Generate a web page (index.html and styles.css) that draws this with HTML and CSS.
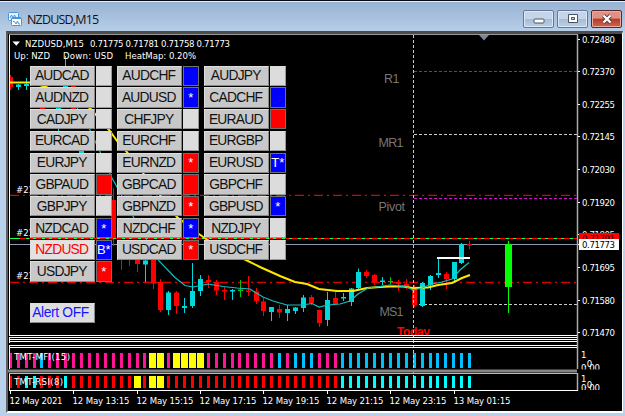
FILE: index.html
```
<!DOCTYPE html>
<html lang="en">
<head>
    <meta charset="UTF-8">
    <title>NZDUSD,M15</title>
    <link rel="stylesheet" href="styles.css">
</head>
<body>
    <div class="window">
        <div class="titlebar">
            <svg class="app-icon" width="14" height="15" viewBox="0 0 14 15">
                <rect x="0.5" y="0.5" width="10" height="8" rx="1" fill="#e8f4ff" stroke="#4a94dc"/>
                <path d="M2 6l1.500-3 1.500 3 1.500-3 1.500 3" fill="none" stroke="#4a94dc"/>
                <rect x="3.500" y="5.500" width="10" height="8" rx="1" fill="#fff" stroke="#4a94dc"/>
                <path d="M4 6.500h9" stroke="#4a94dc"/>
                <path d="M5 9.500h1.500l1.500 2.500 1.500-3 1 3h1.500" fill="none" stroke="#4a94dc"/>
            </svg>
            <span class="title">NZDUSD,M15</span>
            <div class="controls">
                <div class="control"><svg width="12" height="10" viewBox="0 0 12 10"><rect x="1" y="5" width="10" height="4" rx="1" fill="#fff" stroke="#4d5260"/></svg></div>
                <div class="control"><svg width="12" height="10" viewBox="0 0 12 10"><path d="M1.500 .5h9v8h-9zM4.500 3.500h3v2h-3z" fill="#fff" fill-rule="evenodd" stroke="#4d5260"/></svg></div>
                <div class="control close"><svg width="12" height="10" viewBox="0 0 12 10"><path d="M2.500 1.500l7 7M9.500 1.500l-7 7" stroke="#5a3038" stroke-width="4"/><path d="M2.500 1.500l7 7M9.500 1.500l-7 7" stroke="#fff" stroke-width="2.400"/></svg></div>
            </div>
        </div>
        <div class="client">
            <svg class="chart" width="614" height="377" viewBox="8 34 614 377">
                <defs>
                    <clipPath id="main"><rect x="10" y="35" width="567" height="300"/></clipPath>
                    <clipPath id="mfiScale"><rect x="578" y="348" width="43" height="21.500"/></clipPath>
                    <clipPath id="rsiScale"><rect x="578" y="373" width="43" height="17"/></clipPath>
                </defs>

                <!-- pivot levels -->
                <path class="level red" d="M414 71.500H577"/>
                <path class="level white" d="M414 134.500H577"/>
                <path class="level magenta" d="M414 198.500H577"/>
                <path class="level white" d="M414 304.500H577"/>
                <g class="level-name">
                    <text x="384" y="83" textLength="15.500">R1</text>
                    <text x="378.500" y="146.500" textLength="25">MR1</text>
                    <text x="378.500" y="210.500" textLength="26.500">Pivot</text>
                    <text x="379.500" y="316" textLength="24">MS1</text>
                </g>

                <!-- open orders -->
                <path class="order" d="M10 195.300H577M10 282.300H577"/>
                <g class="small">
                    <text x="16" y="192.500">#21</text>
                    <text x="16" y="235.500">#21</text>
                    <text x="16" y="279">#21</text>
                </g>
                <path d="M10 244.500H577" stroke="#8c9ab4"/>

                <g id="candles" clip-path="url(#main)"></g>
                <path d="M10 238.500H577" stroke="#2f4"/>
                <path d="M20 238.500H577" stroke="#f00" stroke-dasharray="6 3 4 3"/>

                <!-- moving averages -->
                <polyline class="slow" points="10,82.500 30,82.500 45,86.500 75,100 90,108 110,131 117,141 126,151 143,173 160,195 177,217 199,234 206,239 225,250 247,260.500 260,267 280,276 295,282 307,284 319,289 337,291 353,291 367,288 380,287 390,286.500 403,286.500 413,288 428,287.500 438,285 452,283 462,278 470,275"/>
                <polyline class="fast" points="65,87 90,130 112,178 117,187 135,220 159,261 175,277.500 185,285.500 193,287 208,284 223,286.500 237,288 250,289 253,291 263,297 273,301 287,305 302,305 312,303.500 319,307 328,305 340,304 350,301 358,294 368,288 380,286.500 390,285 407,287 413,290 422,288 432,284 442,282 452,279 460,270 469,262.500"/>
                <path d="M437 258H470" stroke="#fff" stroke-width="2"/>
                <path d="M508.500 241V313" stroke="#0f0"/>
                <rect x="505" y="244" width="7" height="43" fill="#0f0"/>
                <g clip-path="url(#main)"><text class="today" x="397" y="335.800" textLength="33">Today</text></g>

                <!-- indicator bars -->
                <g id="mfi"></g>
                <g id="rsi"></g>
                <path d="M413.500 35V390" stroke="#ccc" stroke-dasharray="3 2"/>

                <!-- frames -->
                <path d="M9.500 34.500V335M9.500 337V343M9.500 345V369M9.500 373V391" stroke="#fff"/>
                <path d="M577.500 34.500V369M577.500 373V391" stroke="#aaa" stroke-width="1.500"/>
                <path d="M9 34.500H578" stroke="#999"/>
                <path d="M9 335.500H577M9 337.500H577M9 339.500H577M9 341.500H577M9 345.500H577M9 347.500H577M9 390.500H578" stroke="#fff"/>
                <path d="M8 371H577" stroke="#858585" stroke-width="3"/>
                <path d="M9 373.500H577" stroke="#bbb"/>
                <path d="M479 35h10l-5 5.500z" fill="#78879a"/>
                <path d="M12.500 41.500h7.500l-3.700 4.200z" fill="#fff"/>

                <g class="small">
                    <text x="25" y="46.500" textLength="59">NZDUSD,M15</text>
                    <text x="90" y="46.500" textLength="140">0.71775 0.71781 0.71758 0.71773</text>
                    <text x="14" y="59.300" textLength="36">Up: NZD</text>
                    <text x="63" y="59.300" textLength="50">Down: USD</text>
                    <text x="125" y="59.300" textLength="71">HeatMap: 0.20%</text>
                    <text x="14" y="360" textLength="56">TMT-MFI(15)</text>
                    <text x="14" y="384.500" textLength="49">TMT-RSI(8)</text>
                </g>

                <g class="small" id="prices"></g>
                <g class="small" clip-path="url(#mfiScale)">
                    <text x="581" y="358">1</text><text x="584" y="367">.0</text><text x="581" y="371">0.00</text>
                </g>
                <g class="small" clip-path="url(#rsiScale)">
                    <text x="581" y="382">1</text><text x="584" y="388">.0</text><text x="581" y="391">0.00</text>
                </g>
                <rect x="579" y="233" width="40" height="11" fill="#f00"/>
                <text class="tag" x="582" y="241.500" textLength="33">0.71791</text>
                <rect x="579" y="239" width="40" height="11" fill="#fff"/>
                <text class="tag" x="582" y="248" textLength="33">0.71773</text>
                <g class="small" id="times"></g>
            </svg>

            <div class="panel">
                <div class="pairs" id="pairs"></div>
                <div class="alert">Alert OFF</div>
            </div>
        </div>
    </div>
    <script src="script.js"></script>
</body>
</html>
```
FILE: styles.css
```
body {
    margin: 0;
    background: #b9d1ea;
    font-family: "Liberation Sans", Arial, sans-serif;
    overflow: hidden;
}
.window {
    box-sizing: border-box;
    width: 625px;
    height: 416px;
    border-top: 1px solid #0a0a14;
    background: #b9d1ea;
}
.titlebar {
    box-sizing: border-box;
    height: 30px;
    display: flex;
    align-items: center;
    padding: 6px 3px 0 8px;
    border-top: 1px solid #e8eef8;
    background: linear-gradient(#98b2d2, #b7cee8);
}
.title {
    margin-left: 5px;
    font-family: "Open Sans", sans-serif;
    font-size: 12.5px;
    letter-spacing: -0.8px;
    color: #111;
}
.controls {
    margin-left: auto;
    display: flex;
    gap: 3px;
}
.control {
    box-sizing: border-box;
    width: 31px;
    height: 18px;
    display: flex;
    align-items: center;
    justify-content: center;
    position: relative;
    top: -1px;
    border: 1px solid #61789a;
    border-radius: 2px;
    box-shadow: inset 0 0 0 1px #dce8f5;
    background: linear-gradient(#c4d5e9 50%, #a4bbd6 50%, #bdd2e8);
}
.close {
    border-color: #5b2530;
    box-shadow: inset 0 0 0 1px #e9aca2;
    background: linear-gradient(#dd9284 45%, #b63b25 50%, #c9674c);
}
.client {
    position: relative;
    width: 614px;
    height: 377px;
    margin-left: 6px;
    border-top: 3px solid #4c4c4c;
    border-left: 2px solid #606060;
    border-right: 1px solid #fff;
    border-bottom: 2px solid #fff;
    background: #000;
}
.chart {
    display: block;
}

/* chart drawing */
.small, .tag {
    font-family: "DejaVu Sans Condensed", "Noto Sans", sans-serif;
    font-size: 9.5px;
    fill: #fff;
}
.tag {
    fill: #000;
}
.level {
    stroke-dasharray: 3 2;
}
.red {
    stroke: #f01010;
}
.white {
    stroke: #ccc;
}
.magenta {
    stroke: #d010d0;
}
.level-name {
    font-size: 12.5px;
    fill: #777;
}
.order {
    stroke: #e00000;
    stroke-width: 1.3;
    stroke-dasharray: 9 4 2 4;
}
.slow {
    fill: none;
    stroke: #ffe800;
    stroke-width: 2;
}
.fast {
    fill: none;
    stroke: #14c0c4;
    stroke-width: 1.2;
}
.today {
    font-size: 12px;
    font-weight: bold;
    fill: #f00;
}

/* pair buttons lie over the chart */
.panel {
    position: absolute;
    left: 22px;
    top: 31.5px;
}
.pairs {
    display: grid;
    grid-template-columns: repeat(3, 82px);
    grid-auto-rows: 20.3px;
    column-gap: 5px;
    row-gap: 1.48px;
}
.pair {
    display: flex;
    gap: 1px;
}
.name, .flag, .alert {
    box-sizing: border-box;
    display: flex;
    align-items: center;
    justify-content: center;
    border: 1px solid #8a8a8a;
    border-top-color: #dedede;
    border-left-color: #dedede;
    white-space: nowrap;
}
.name {
    width: 65px;
    padding-right: 1px;
    background: #c8c8c8;
    color: #111;
    font-size: 13.8px;
    letter-spacing: -0.75px;
}
.name.active {
    background: #e2e2e2;
    color: #f00;
}
.flag {
    width: 16.5px;
    background: #dcdcdc;
    border-color: #707070;
    color: #fff;
    font-size: 13px;
}
.flag.none {
    border-color: #dcdcdc #999 #999 #dcdcdc;
}
.flag.up {
    background: #00f;
}
.flag.down {
    background: #f00;
}
.alert {
    width: 65px;
    height: 20px;
    margin-top: 21px;
    padding-right: 4px;
    background: #dedede;
    color: #1414ff;
    font-size: 13.8px;
    letter-spacing: -0.35px;
}
```
FILE: script.js
```
const START = 10;
const STEP = 7.92;
const colors = { r: '#f00', c: '#00d8dc', g: '#00c800', p: '#ff1493', b: '#00bfff', y: '#ff0', a: '#0ff' };

// bar, colour, high, low, body top, body bottom
const candles = [
    [0, 'r', 75, 90, 77, 87], [1, 'c', 84, 90, 84.5, 87], [2, 'c', 78, 90, 84, 86],
    [4, 'r', 98, 112, 101, 110], [6, 'c', 104, 132, 107, 128], [7, 'c', 56, 92, 70, 88],
    [8, 'r', 64, 112, 84, 110], [9, 'c', 148, 158, 150, 156], [13, 'r', 188, 246, 200, 238],
    [14, 'r', 258, 270, 258, 259], [15, 'r', 258, 266, 258, 259], [16, 'r', 258, 272, 258, 264],
    [17, 'c', 258, 282, 260.5, 264.5], [18, 'r', 258, 289, 259, 283.5], [19, 'r', 279, 312, 282, 310],
    [20, 'c', 291, 315, 292.5, 310], [21, 'r', 291, 314, 292.5, 306], [22, 'c', 298, 313, 306, 308],
    [23, 'c', 263, 308, 291, 306], [24, 'c', 275, 296, 279, 291], [25, 'r', 275, 288, 280, 282],
    [26, 'r', 280, 295, 282, 290.5], [27, 'r', 287, 300, 290, 291.5], [28, 'c', 289, 300, 290, 291.5],
    [29, 'g', 280, 297, 289.5, 291], [30, 'r', 276, 296, 290.5, 292], [31, 'r', 288, 304, 291.5, 301],
    [32, 'r', 298, 316, 301.5, 311], [33, 'c', 307, 321, 307, 312], [34, 'r', 305, 318, 309, 312.5],
    [35, 'c', 305, 321, 309, 313], [36, 'c', 307, 314, 307.5, 311], [37, 'c', 295, 312, 297.5, 308],
    [38, 'r', 295, 305, 297, 303], [39, 'r', 309.5, 327, 310, 323], [40, 'c', 292, 326, 300, 320],
    [41, 'r', 292, 304, 298, 304], [42, 'c', 293, 301, 297, 298.5], [43, 'c', 288, 306, 288.5, 302],
    [44, 'c', 268.5, 290, 272, 288], [45, 'r', 270, 278, 272, 276], [46, 'r', 274, 285, 275, 282],
    [47, 'c', 277, 285, 280.5, 282], [48, 'g', 277, 284, 281, 282], [49, 'r', 280, 291, 282, 284],
    [50, 'r', 279, 289, 284, 287], [51, 'r', 285, 307, 288, 305], [52, 'c', 282, 307, 283, 306],
    [53, 'c', 275, 290, 276, 285], [54, 'c', 258, 278, 273, 275], [55, 'r', 272, 289, 274, 279],
    [56, 'c', 262, 281, 262, 279], [57, 'c', 243, 264, 244, 263], [58, 'r', 241, 249, 244, 245.5]
];
document.getElementById('candles').innerHTML = candles.map(([i, color, high, low, top, bottom]) => {
    const x = Math.round(START + i * STEP);
    return `<g fill="${colors[color]}"><rect x="${x}" y="${high}" width="1" height="${low - high}"/>` +
        `<rect x="${x - 2}" y="${top}" width="5" height="${bottom - top}"/></g>`;
}).join('');

// one letter for each bar
function drawBars(id, bars, top, height) {
    document.getElementById(id).innerHTML = [...bars].map((bar, i) => {
        const width = bar === 'y' ? 7 : 3;
        const x = Math.max(Math.round(START + i * STEP - width / 2 + 0.3), 10);
        return `<rect x="${x}" y="${top}" width="${i ? width : 2}" height="${height}" fill="${colors[bar]}"/>`;
    }).join('');
}
drawBars('mfi', 'ppppb' + 'p'.repeat(13) + 'yypyyyy' + 'p'.repeat(9) + 'bpbbbppp' + 'b'.repeat(17), 353, 15);
drawBars('rsi', 'rraarrra' + 'r'.repeat(8) + 'yryy' + 'r'.repeat(22) + 'a'.repeat(17), 376, 12);

const prices = ['0.72480', '0.72370', '0.72255', '0.72145', '0.72030', '0.71920', '0.71805', '', '0.71695', '0.71580', '0.71470'];
const priceY = [39, 71.5, 104.3, 136.7, 169.5, 202, 234.5, 244, 267.3, 300, 332.5];
document.getElementById('prices').innerHTML = prices.map((price, i) =>
    `<rect x="578" y="${Math.floor(priceY[i])}" width="2" height="1"/>` +
    (price ? `<text x="582" y="${priceY[i] + 3.6}" textLength="33">${price}</text>` : '')
).join('');

const times = ['12 May 2021', '12 May 13:15', '12 May 15:15', '12 May 17:15', '12 May 19:15', '12 May 21:15', '12 May 23:15', '13 May 01:15'];
document.getElementById('times').innerHTML = times.map((time, i) => {
    const x = Math.round(START + i * 8 * STEP);
    return `<rect x="${x}" y="391" width="1" height="3"/>` +
        `<text x="${x - 0.5}" y="403.5" textLength="${i ? 57 : 53}">${time}</text>`;
}).join('');

// name, flag direction, flag text
const pairs = [
    ['AUDCAD'], ['AUDCHF', 'up'], ['AUDJPY'],
    ['AUDNZD'], ['AUDUSD', 'up', '*'], ['CADCHF', 'up'],
    ['CADJPY'], ['CHFJPY'], ['EURAUD', 'down'],
    ['EURCAD'], ['EURCHF'], ['EURGBP'],
    ['EURJPY'], ['EURNZD', 'down', '*'], ['EURUSD', 'up', 'T*'],
    ['GBPAUD', 'down'], ['GBPCAD', 'down'], ['GBPCHF'],
    ['GBPJPY'], ['GBPNZD', 'down', '*'], ['GBPUSD', 'up', '*'],
    ['NZDCAD', 'up', '*'], ['NZDCHF', 'up', '*'], ['NZDJPY'],
    ['NZDUSD', 'up', 'B*'], ['USDCAD', 'down', '*'], ['USDCHF'],
    ['USDJPY', 'down', '*']
];
document.getElementById('pairs').innerHTML = pairs.map(([name, flag = 'none', text = '']) =>
    `<div class="pair"><div class="name${name === 'NZDUSD' ? ' active' : ''}">${name}</div>` +
    `<div class="flag ${flag}">${text}</div></div>`
).join('');
```
